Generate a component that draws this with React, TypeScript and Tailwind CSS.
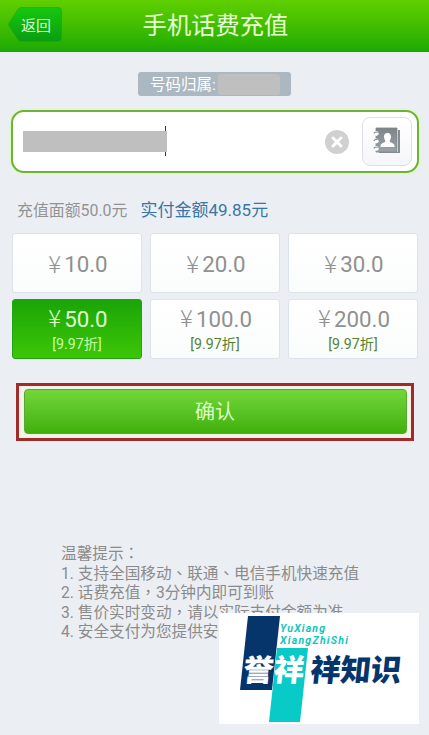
import React from 'react';

type Denomination = {
  amount: string;
  discount?: string;
  selected?: boolean;
};

const denominations: Denomination[] = [
  { amount: '10.0' },
  { amount: '20.0' },
  { amount: '30.0' },
  { amount: '50.0', discount: '9.97折', selected: true },
  { amount: '100.0', discount: '9.97折' },
  { amount: '200.0', discount: '9.97折' },
];

const tips = [
  '1. 支持全国移动、联通、电信手机快速充值',
  '2. 话费充值，3分钟内即可到账',
  '3. 售价实时变动，请以实际支付金额为准',
  '4. 安全支付为您提供安',
];

// Punctuation sits in the middle of its cell, so it takes the TC face
const TipText: React.FC<{ text: string }> = ({ text }) => (
  <p className="h-[19.700px]">
    {text.split(/([、，：])/).map((part, i) =>
      /^[、，：]$/.test(part) ? (
        <span key={i} className="font-['Noto_Sans_CJK_TC',sans-serif]">{part}</span>
      ) : (
        part
      )
    )}
  </p>
);

const Header = () => (
  <header className="relative flex h-[52px] items-center justify-center border-b border-[#2b9a1c] bg-linear-to-b from-[#5fd000] to-[#19ab03]">
    <button className="absolute left-2 top-[7px] h-[35px] w-[54px]">
      <svg className="absolute inset-0" width="54" height="35" viewBox="0 0 54 35">
        <defs>
          <linearGradient id="back" x1="0" y1="0" x2="0" y2="1">
            <stop offset="0" stopColor="#16c80e" />
            <stop offset="1" stopColor="#099d12" />
          </linearGradient>
        </defs>
        <path
          d="M13 .5H50a3.500 3.500 0 0 1 3.500 3.500V31a3.500 3.500 0 0 1-3.500 3.500H13q-2 0-3-2L1 19q-1-1.500 0-3L10 2.500q1-2 3-2Z"
          fill="url(#back)"
          stroke="#1fa80a"
          strokeOpacity=".7"
        />
      </svg>
      <span className="relative left-px top-[2px] text-[15px] leading-[35px] text-[#d9ffd0]">返回</span>
    </button>
    <h1 className="pl-[2px] text-[24.300px] leading-[50px] text-[#e6ffd2]">手机话费充值</h1>
  </header>
);

const ContactsIcon = () => (
  <svg width="28" height="28" viewBox="0 0 28 28">
    <defs>
      <linearGradient id="book" x1="0" y1="0" x2="0" y2="1">
        <stop offset="0" stopColor="#7d8589" />
        <stop offset="1" stopColor="#9aa3a7" />
      </linearGradient>
    </defs>
    <path d="M25 3h2v23H6v-1h19Z" fill="#858e92" />
    <path d="M3 1h21v24H3Z" fill="url(#book)" stroke="#7d8589" strokeWidth=".8" />
    <path
      d="M14.500 6c2.500 0 3.700 1.700 3.500 4.100-.1 1.500-.7 2.500-1.200 3.300v1.600c1.600.8 4.200 1.200 4.700 3.500V20h-14v-1.500c.5-2.300 3.100-2.700 4.700-3.500v-1.600c-.5-.8-1.100-1.800-1.200-3.300-.2-2.400 1-4.100 3.500-4.100Z"
      fill="#fff"
    />
    {[6.5, 14, 21.5].map((y) => (
      <g key={y}>
        <circle cx="3" cy={y} r="2.400" fill="#fff" />
        <path d={`M1 ${y}c.5-2 3.500-2 4 0`} fill="none" stroke="#7f888c" strokeWidth="1.200" />
        <circle cx="4.500" cy={y + 0.3} r="1.200" fill="#fff" />
      </g>
    ))}
  </svg>
);

const NumberField = () => (
  <div className="mx-[11px] mt-[14px] flex h-[63px] w-[408px] items-center rounded-[13px] border-2 border-[#70b03c] bg-white pl-[10px] pr-[5px] shadow-[0_0_2px_1px_#d5ffa8]">
    <div className="relative h-[21px] w-[144px] bg-[#bfbfbf]">
      <span className="absolute -top-[5px] right-px h-[5px] w-px bg-[#333]" />
      <span className="absolute -bottom-1 right-px h-1 w-px bg-[#333]" />
    </div>
    <button className="ml-auto mr-[13px]">
      <svg width="24" height="24" viewBox="0 0 24 24">
        <circle cx="12" cy="12" r="12" fill="#d0d0d0" />
        <path d="m8 8 8 8m0-8-8 8" stroke="#fff" strokeWidth="3" strokeLinecap="round" />
      </svg>
    </button>
    <button className="-mt-px flex h-[49px] w-[50px] items-center justify-center rounded-[8px] border border-[#dfdfe7] bg-linear-to-b from-white to-[#f5f6f9]">
      <ContactsIcon />
    </button>
  </div>
);

const DenominationCard: React.FC<{ item: Denomination }> = ({ item }) => (
  <button
    className={`flex h-[60px] flex-col items-center justify-center rounded-[3px] border pt-[3px] ${
      item.selected
        ? 'border-[#22a312] bg-linear-to-b from-[#19a507] to-[#3cc606] text-[#dfffd0]'
        : 'border-[#dce3eb] bg-linear-to-b from-white to-[#fafcfb] text-[#909090]'
    }`}
  >
    <span className="flex items-center pl-0.5 text-[22.300px] leading-[25px]">
      <span className="-mt-[5px] mr-[3px] font-['Noto_Sans_CJK_SC',sans-serif] text-[24px] font-light">¥</span>
      {item.amount}
    </span>
    {item.discount && (
      <span className={`mt-px text-[14.200px] leading-[22px] ${item.selected ? 'text-[#c8ffa8]' : 'text-[#558230]'}`}>
        [{item.discount}]
      </span>
    )}
  </button>
);

const Watermark = () => (
  <div className="absolute left-[219px] top-[613px] h-[111px] w-[200px] bg-white">
    <svg
      width="200"
      height="111"
      viewBox="0 0 200 111"
      className="font-['Noto_Sans_CJK_SC',sans-serif] font-black"
    >
      <path d="M29 3h32l-8 74H21Z" fill="#06356b" />
      <path d="M58 35h31l-8 74H50Z" fill="#08cbc8" />
      <g fill="#12c5bd" fontSize="10.500" fontFamily="Roboto, sans-serif" fontWeight="700" fontStyle="italic">
        <text x="61" y="18.500" textLength="45">YuXiang</text>
        <text x="61" y="30.500" textLength="68">XiangZhiShi</text>
      </g>
      <g transform="translate(0 70) skewX(-6)" fontSize="30.500" fontWeight="900">
        <text x="23" y="-2" fill="#fff" textLength="61">誉祥</text>
        <text x="90" y="-2" fill="#06356b" textLength="91">祥知识</text>
      </g>
    </svg>
  </div>
);

export default function App() {
  return (
    <div className="relative h-[735px] w-[429px] overflow-hidden bg-[#ebeff4] font-[Roboto,'Noto_Sans_CJK_SC',sans-serif]">
      <Header />
      <div className="ml-[138px] mt-5 flex h-6 w-[153px] items-center rounded-[3px] bg-[#abb8c1] pl-[12px] text-[15.500px] text-white">
        <span className="mr-0.5 whitespace-nowrap pt-px leading-6">号码归属:</span>
        <span className="h-[21px] w-[62px] shrink-0 rounded-[3px] bg-[#bfbfbf]" />
      </div>
      <NumberField />
      <div className="mt-[25px] flex h-[26px] items-center pl-[17px]">
        <span className="text-[15.900px] text-[#939393]">充值面额50.0元</span>
        <span className="ml-[13px] text-[17px] text-[#3876a5]">实付金额49.85元</span>
      </div>
      <div className="mx-3 mt-[9px] grid w-[406px] grid-cols-3 gap-x-2 gap-y-1.5">
        {denominations.map((item) => (
          <DenominationCard key={item.amount} item={item} />
        ))}
      </div>
      <div className="ml-4 mt-6 flex h-[58px] w-[398px] justify-center border-3 border-[#a32a2a] bg-[#f4f4e6] pt-[3px]">
        <button className="h-[45px] w-[383px] rounded-[4px] border border-[#55a832] bg-linear-to-b from-[#73d638] to-[#3fb00a] text-[20px] leading-[45px] text-[#dcffc4]">
          确认
        </button>
      </div>
      <div className="ml-[61px] mt-[102px] whitespace-nowrap text-[15.640px] leading-[19.700px] text-[#8b8b8b]">
        <TipText text="温馨提示：" />
        {tips.map((tip) => (
          <TipText key={tip} text={tip} />
        ))}
      </div>
      <Watermark />
    </div>
  );
}
